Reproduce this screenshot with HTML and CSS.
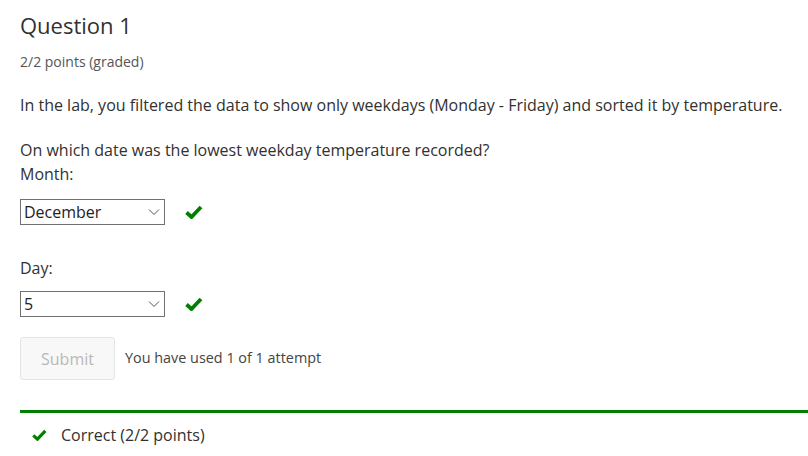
FILE: index.html
```html
<!DOCTYPE html>
<html>
<head>
<meta charset="utf-8">
<link rel="stylesheet" href="styles.css">
</head>
<body>
<div class="problem">
  <h2 class="title">Question 1</h2>
  <div class="points">2/2 points (graded)</div>
  <p class="para">In the lab, you filtered the data to show only weekdays (Monday - Friday) and sorted it by temperature.</p>
  <p class="para q">On which date was the lowest weekday temperature recorded?<br>Month:</p>
  <div class="field">
    <div class="select"><span>December</span><svg class="chev" width="12" height="8" viewBox="0 0 12 8"><path d="M1 1.5 L6 6.5 L11 1.5" fill="none" stroke="#555" stroke-width="1"/></svg></div>
    <svg class="check" width="18" height="14" viewBox="0 0 18 14"><path d="M1.5 7.5 L6.5 12 L16 2" fill="none" stroke="#008000" stroke-width="3.8"/></svg>
  </div>
  <div class="label">Day:</div>
  <div class="field second">
    <div class="select"><span>5</span><svg class="chev" width="12" height="8" viewBox="0 0 12 8"><path d="M1 1.5 L6 6.5 L11 1.5" fill="none" stroke="#555" stroke-width="1"/></svg></div>
    <svg class="check" width="18" height="14" viewBox="0 0 18 14"><path d="M1.5 7.5 L6.5 12 L16 2" fill="none" stroke="#008000" stroke-width="3.8"/></svg>
  </div>
  <div class="actions">
    <div class="submit">Submit</div>
    <div class="attempts">You have used 1 of 1 attempt</div>
  </div>
  <div class="result">
    <svg class="check small" width="15" height="12" viewBox="0 0 18 14"><path d="M1.5 7.5 L6.5 12 L16 2" fill="none" stroke="#008000" stroke-width="3.8"/></svg>
    <span>Correct (2/2 points)</span>
  </div>
</div>
</body>
</html>
```
FILE: styles.css
```css
html, body { margin: 0; padding: 0; background: #fff; }
body { font-family: "Open Sans", sans-serif; color: #313131; }
.problem { padding: 0 0 0 20px; }
.title { margin: 0; padding-top: 9px; font-size: 22px; font-weight: 400; line-height: 32px; color: #313131; }
.points { margin-top: 11px; font-size: 14px; line-height: 20px; color: #555; }
.para { margin: 0; font-size: 16px; line-height: 24px; color: #313131; }
.points + .para { margin-top: 21px; }
.q { margin-top: 21px; }
.field { display: flex; align-items: center; gap: 20px; margin-top: 13px; }
.field.second { margin-top: 11px; }
.select { box-sizing: border-box; width: 145px; height: 26px; border: 1px solid #707070; display: flex; align-items: center; justify-content: space-between; padding: 0 4px 0 3px; font-size: 16px; color: #222; }
.check { display: block; }
.label { margin-top: 31px; font-size: 16px; line-height: 24px; }
.actions { display: flex; align-items: flex-start; gap: 10px; margin-top: 20px; }
.submit { box-sizing: border-box; width: 95px; height: 43px; border: 1px solid #e4e4e4; border-radius: 3px; background: #f8f8f8; color: #b9b9b9; font-size: 16px; display: flex; align-items: center; justify-content: center; }
.attempts { font-size: 14.4px; line-height: 20px; padding-top: 11px; color: #444; }
.result { margin-top: 30px; border-top: 3px solid #008000; display: flex; align-items: center; gap: 14px; padding: 11px 0 0 12px; font-size: 16px; line-height: 22px; }
```
